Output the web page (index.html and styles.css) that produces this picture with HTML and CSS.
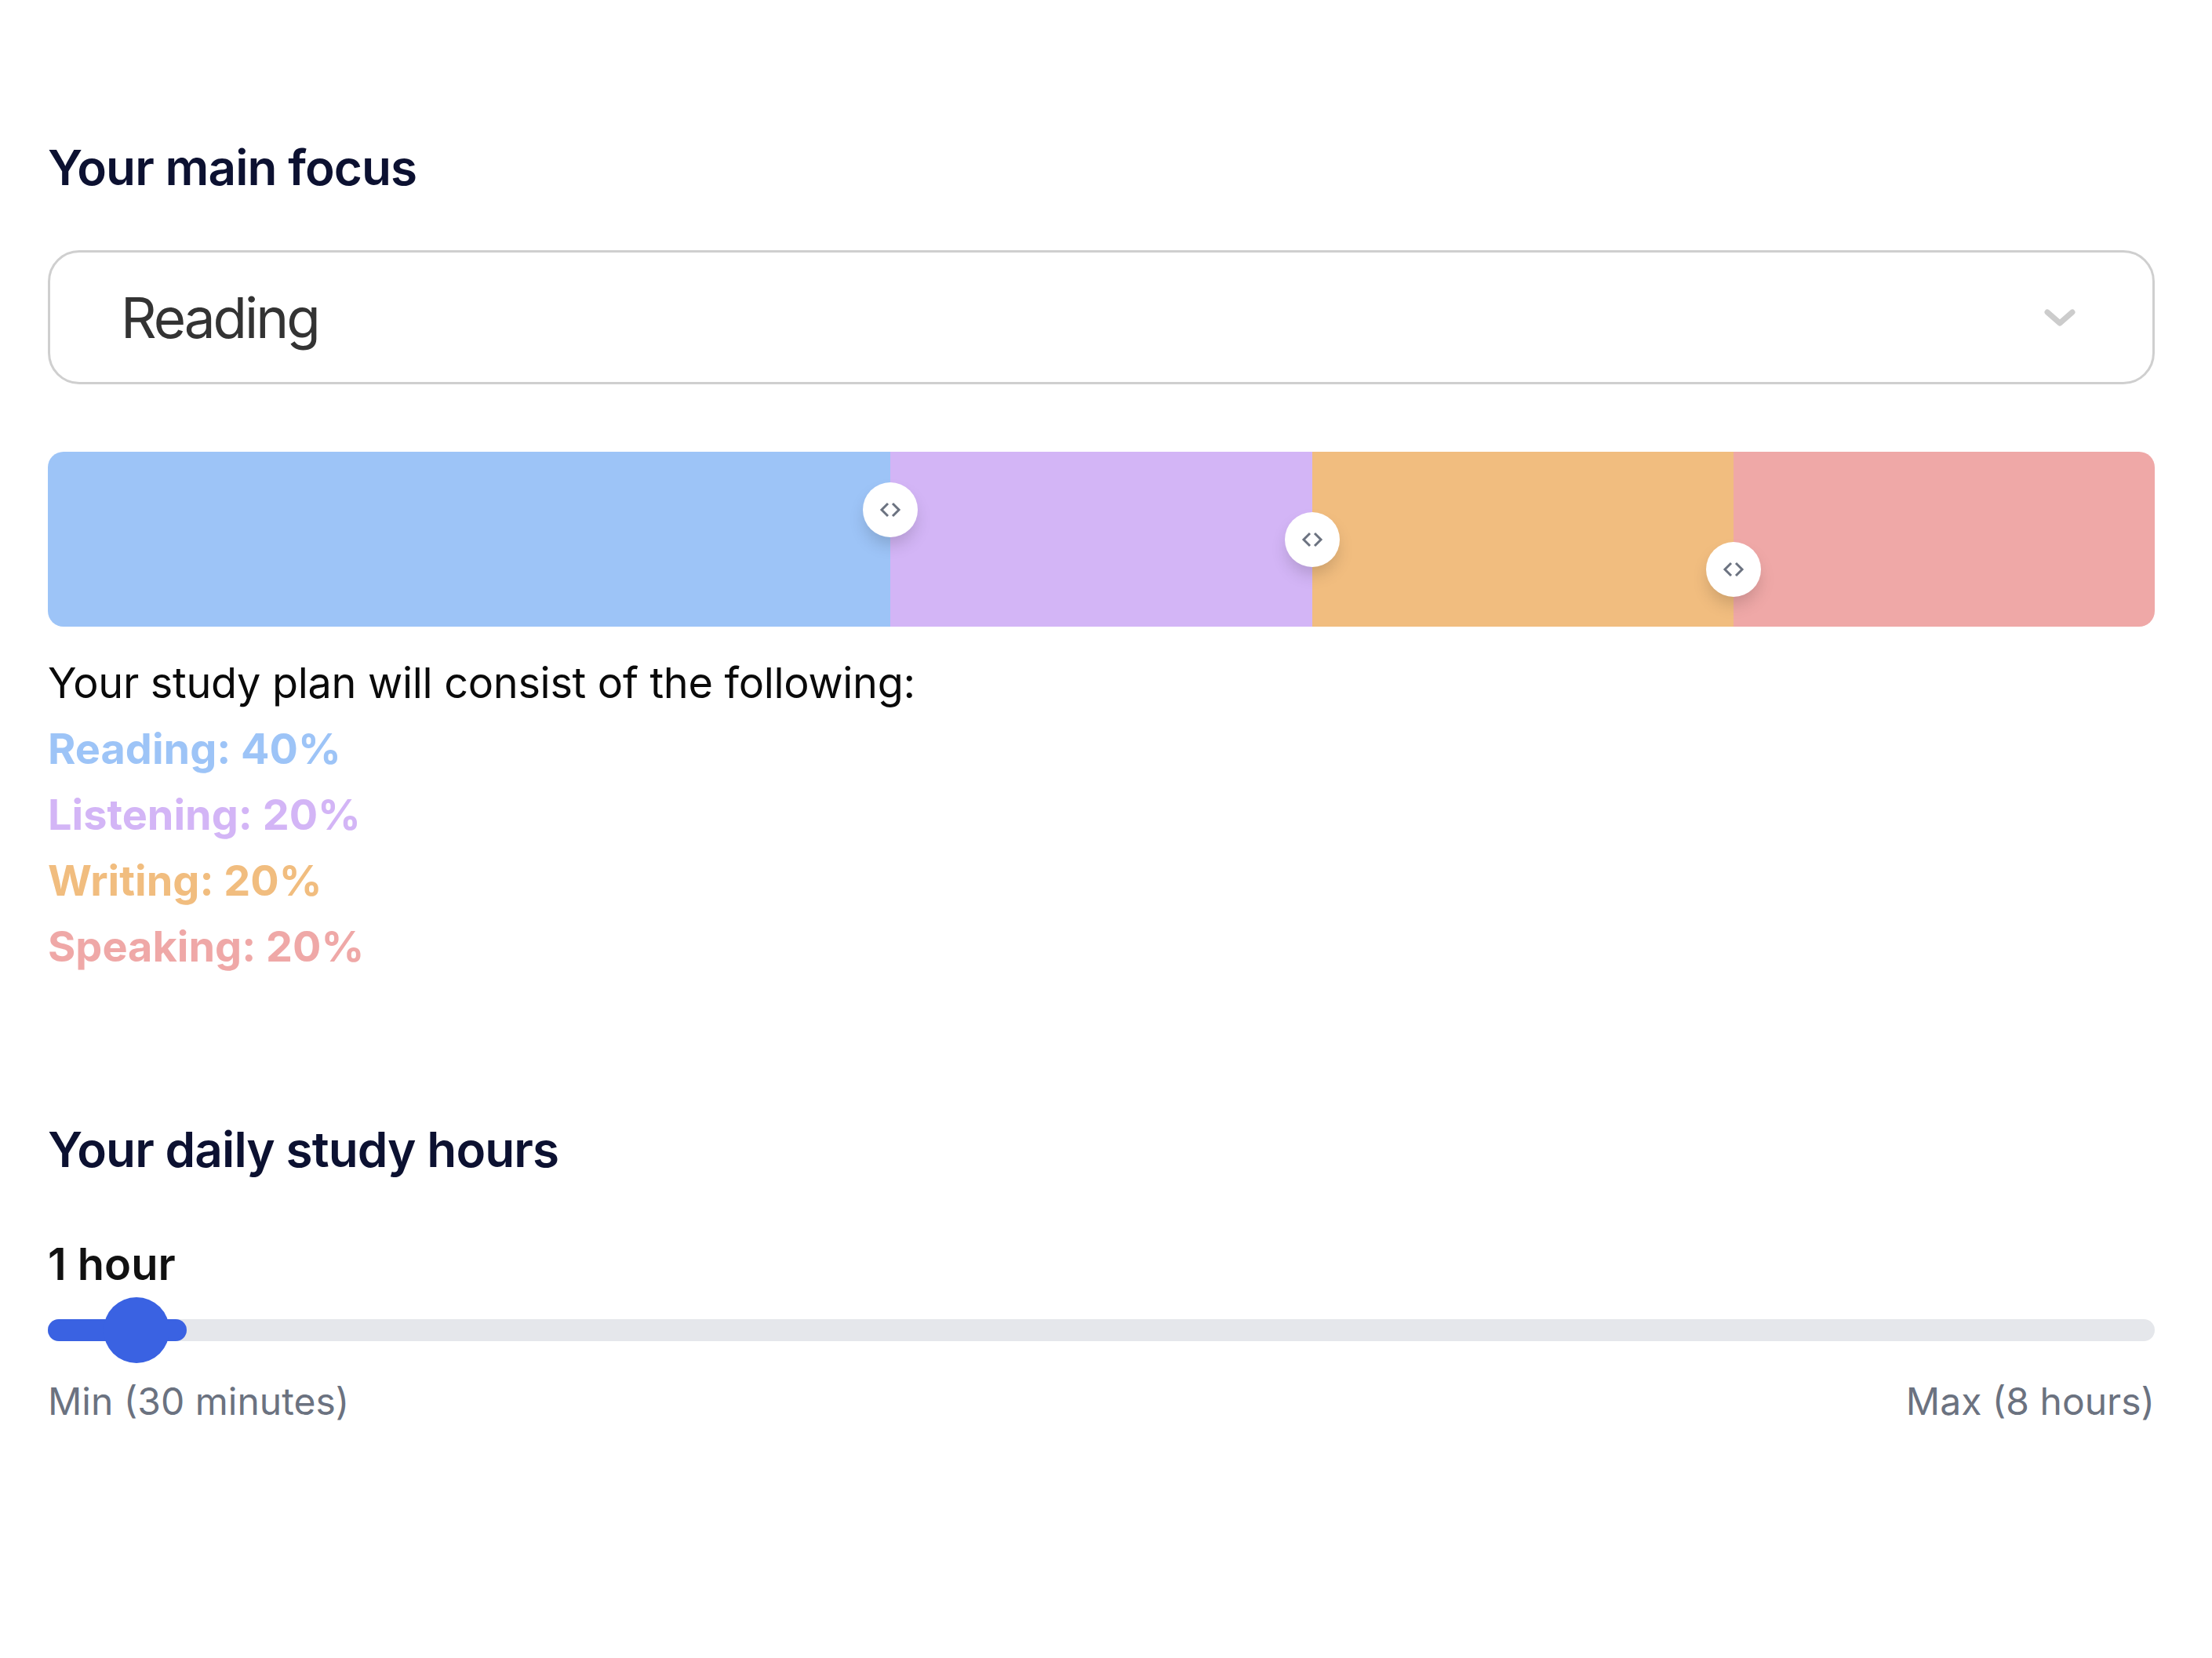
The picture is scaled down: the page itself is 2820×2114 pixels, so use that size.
FILE: index.html
```html
<!DOCTYPE html>
<html lang="en">
<head>
    <meta charset="UTF-8">
    <meta name="viewport" content="width=device-width, initial-scale=1.0">
    <title>Study plan</title>
    <link rel="stylesheet" href="styles.css">
</head>
<body>

<div class="page">
    <section class="focus">
        <h2 class="section-title">Your main focus</h2>

        <div class="select">
            <span class="select-value">Reading</span>
            <svg class="select-chevron" width="40" height="22" viewBox="0 0 40 22">
                <polyline points="4,4 20,18 36,4" fill="none" stroke="#cccccc" stroke-width="7" stroke-linecap="round" stroke-linejoin="round"/>
            </svg>
        </div>

        <!-- split bar with drag handles between the skills -->
        <div class="split-bar">
            <div class="segment seg-reading" style="width: 40%"></div>
            <div class="segment seg-listening" style="width: 20%"></div>
            <div class="segment seg-writing" style="width: 20%"></div>
            <div class="segment seg-speaking" style="width: 20%"></div>

            <div class="handle handle-1" style="left: 40%">
                <svg width="30" height="20" viewBox="0 0 30 20"><path d="M12 2 L4 10 L12 18 M18 2 L26 10 L18 18" fill="none" stroke="#6b7280" stroke-width="3"/></svg>
            </div>
            <div class="handle handle-2" style="left: 60%">
                <svg width="30" height="20" viewBox="0 0 30 20"><path d="M12 2 L4 10 L12 18 M18 2 L26 10 L18 18" fill="none" stroke="#6b7280" stroke-width="3"/></svg>
            </div>
            <div class="handle handle-3" style="left: 80%">
                <svg width="30" height="20" viewBox="0 0 30 20"><path d="M12 2 L4 10 L12 18 M18 2 L26 10 L18 18" fill="none" stroke="#6b7280" stroke-width="3"/></svg>
            </div>
        </div>

        <p class="plan-intro">Your study plan will consist of the following:</p>
        <ul class="plan-list">
            <li class="txt-reading">Reading: 40%</li>
            <li class="txt-listening">Listening: 20%</li>
            <li class="txt-writing">Writing: 20%</li>
            <li class="txt-speaking">Speaking: 20%</li>
        </ul>
    </section>

    <section class="hours">
        <h2 class="section-title">Your daily study hours</h2>
        <div class="hours-value">1 hour</div>
        <div class="slider">
            <div class="slider-track">
                <div class="slider-fill" style="width: 177px"></div>
            </div>
            <div class="slider-thumb" style="left: 113px"></div>
        </div>
        <div class="slider-labels">
            <span>Min (30 minutes)</span>
            <span>Max (8 hours)</span>
        </div>
    </section>
</div>

</body>
</html>
```

FILE: styles.css
```css
body {
    margin: 0;
    padding: 0;
    background-color: #ffffff;
    font-family: Inter, "Noto Sans", sans-serif;
}

.page {
    width: 2686px;
    margin-left: 61px;
    padding-top: 177px;
}

.section-title {
    margin: 0;
    font-size: 62px;
    line-height: 74px;
    font-weight: 600;
    color: #0c1131;
    letter-spacing: -0.9px;
}

/* select box */
.select {
    margin-top: 68px;
    height: 171px;
    box-sizing: border-box;
    border: 3px solid #cfcfcf;
    border-radius: 40px;
    display: flex;
    align-items: center;
    justify-content: space-between;
    padding: 0 98px 0 90px;
}

.select-value {
    font-size: 71px;
    line-height: 86px;
    color: #333333;
    letter-spacing: -3px;
}

/* split bar */
.split-bar {
    position: relative;
    margin-top: 86px;
    height: 223px;
    display: flex;
    border-radius: 20px;
    overflow: hidden;
}

.segment {
    height: 100%;
}

.seg-reading { background-color: #9dc4f7; }
.seg-listening { background-color: #d3b5f6; }
.seg-writing { background-color: #f1bd7f; }
.seg-speaking { background-color: #efa8a7; }

.handle {
    position: absolute;
    width: 70px;
    height: 70px;
    margin-left: -35px;
    border-radius: 50%;
    background-color: #ffffff;
    box-shadow: 0 12px 22px -4px rgba(0, 0, 0, 0.18);
    display: flex;
    align-items: center;
    justify-content: center;
}

.handle-1 { top: 39px; }
.handle-2 { top: 77px; }
.handle-3 { top: 115px; }

/* plan text */
.plan-intro {
    margin: 30px 0 0;
    font-size: 54px;
    line-height: 84px;
    color: #0a0a0a;
    letter-spacing: -0.3px;
}

.plan-list {
    list-style: none;
    margin: 0;
    padding: 0;
    font-size: 54px;
    line-height: 84px;
    font-weight: 700;
}

.txt-reading { color: #9dc4f7; }
.txt-listening { color: #d3b5f6; }
.txt-writing { color: #f1bd7f; }
.txt-speaking { color: #efa8a7; }

/* daily hours */
.hours {
    margin-top: 180px;
}

.hours-value {
    margin-top: 67px;
    font-size: 56px;
    line-height: 84px;
    font-weight: 600;
    color: #111111;
}

.slider {
    position: relative;
    height: 84px;
    display: flex;
    align-items: center;
}

.slider-track {
    width: 100%;
    height: 28px;
    border-radius: 14px;
    background-color: #e5e7eb;
}

.slider-fill {
    height: 100%;
    border-radius: 14px;
    background-color: #3a62e2;
}

.slider-thumb {
    position: absolute;
    top: 0;
    width: 84px;
    height: 84px;
    margin-left: -42px;
    border-radius: 50%;
    background-color: #3a62e2;
}

.slider-labels {
    margin-top: 13px;
    display: flex;
    justify-content: space-between;
    font-size: 48px;
    line-height: 72px;
    color: #6b7280;
}
```
